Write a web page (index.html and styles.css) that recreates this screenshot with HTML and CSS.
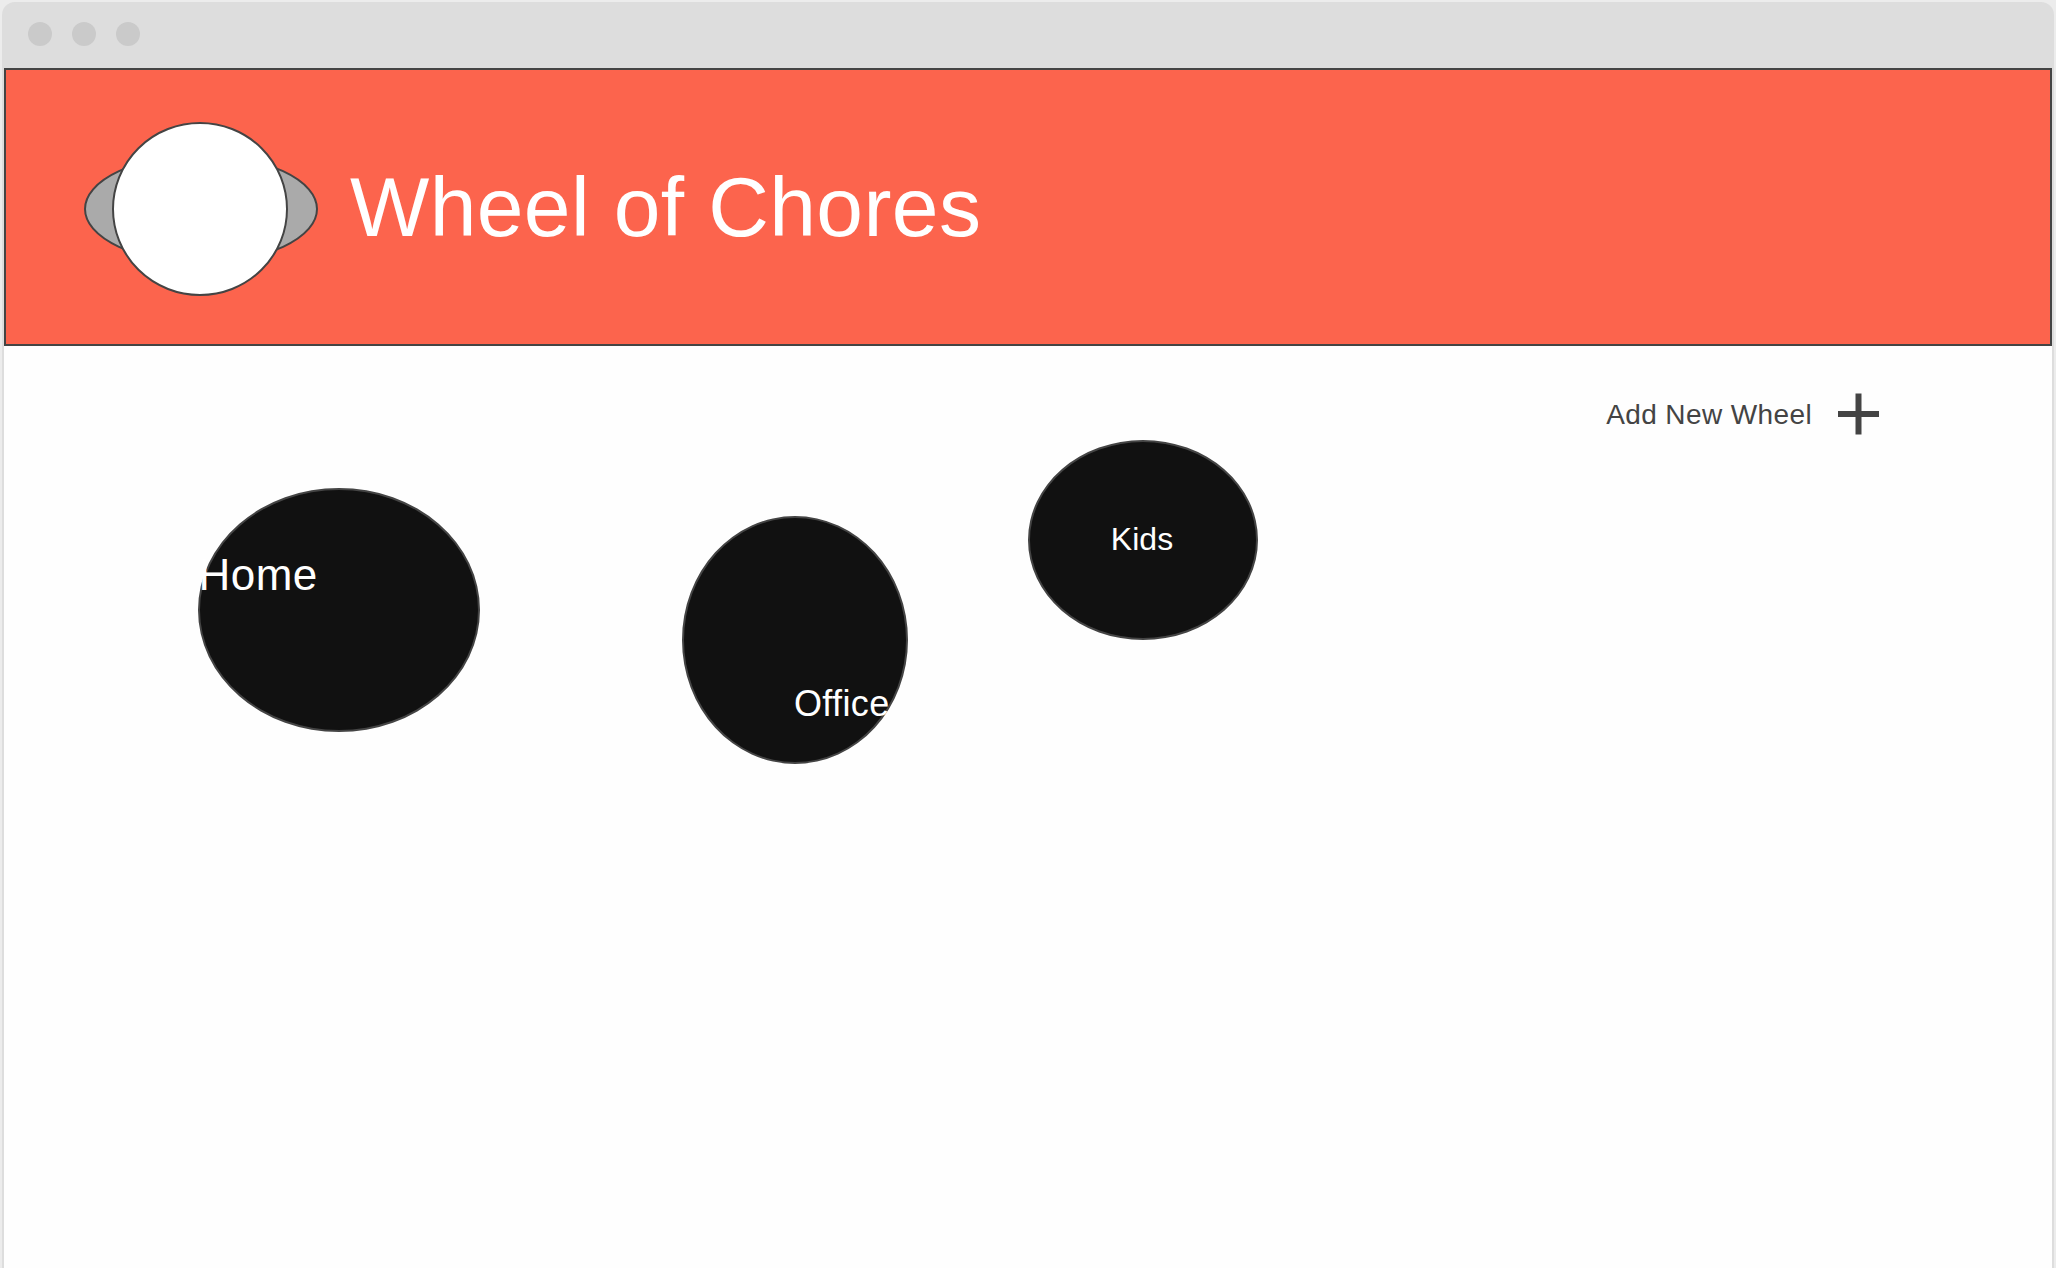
FILE: index.html
```html
<!DOCTYPE html>
<html lang="en">
<head>
<meta charset="utf-8">
<title>Wheel of Chores</title>
<link rel="stylesheet" href="styles.css">
</head>
<body>
<div class="window">
  <div class="titlebar">
    <span class="dot"></span>
    <span class="dot"></span>
    <span class="dot"></span>
  </div>
  <header class="banner">
    <svg class="logo" width="234" height="174" viewBox="0 0 234 174" aria-hidden="true">
      <ellipse class="logo-back" cx="117" cy="87" rx="116" ry="53.5"/>
      <ellipse class="logo-front" cx="116" cy="87" rx="87" ry="86"/>
    </svg>
    <h1 class="title">Wheel of Chores</h1>
  </header>
  <main class="content">
    <button class="add" type="button">
      <span class="add-label">Add New Wheel</span>
      <svg class="plus" width="41" height="42" viewBox="0 0 41 42" aria-hidden="true">
        <path d="M20.5 0.5V41.5M0 21H41"/>
      </svg>
    </button>
    <div class="wheels">
      <div class="wheel home">Home</div>
      <div class="wheel office">Office</div>
      <div class="wheel kids">Kids</div>
    </div>
  </main>
</div>
</body>
</html>
```
FILE: styles.css
```css
* {
  box-sizing: border-box;
}

body {
  margin: 0;
  padding: 2px 2px 0;
  height: 1268px;
  overflow: hidden;
  background: #ececec;
  color: #444;
  font-family: "Liberation Sans", Arial, sans-serif;
}

.window {
  height: 1280px;
  padding: 0 2px;
  border-radius: 13px 13px 0 0;
  background: #ddd;
  overflow: hidden;
}

.titlebar {
  display: flex;
  align-items: center;
  gap: 20px;
  height: 66px;
  padding: 0 24px 2px;
}

.dot {
  width: 24px;
  height: 24px;
  border-radius: 50%;
  background: #cacaca;
}

.banner {
  display: flex;
  align-items: center;
  gap: 32px;
  height: 278px;
  padding: 4px 78px 0;
  border: 2px solid #444;
  background: #fc644d;
}

.logo {
  flex: none;
  stroke: #444;
  stroke-width: 2;
}

.logo-back {
  fill: #aaa;
}

.logo-front {
  fill: #fff;
}

.title {
  margin: 0 0 4px;
  color: #fff;
  font-size: 84px;
  font-weight: 400;
  line-height: 96px;
  letter-spacing: 0.0045em;
}

.content {
  display: flex;
  flex-direction: column;
  height: 932px;
  padding-top: 47px;
  background: #fefefe;
}

.add {
  display: flex;
  align-items: flex-start;
  align-self: flex-end;
  gap: 26px;
  height: 42px;
  margin-right: 173px;
  padding: 0;
  border: 0;
  background: none;
  color: inherit;
  font: 28px/32px "Liberation Sans", Arial, sans-serif;
  letter-spacing: 0.014em;
}

.add-label {
  margin-top: 6px;
}

.plus {
  stroke: #444;
  stroke-width: 6;
}

.wheels {
  display: flex;
  align-items: flex-start;
  padding: 5px 0 0 194px;
}

.wheel {
  flex: none;
  border: 2px solid #444;
  border-radius: 50%;
  background: #111;
  color: #fff;
  white-space: nowrap;
  letter-spacing: 0.01em;
}

.home {
  width: 282px;
  height: 244px;
  margin-top: 48px;
  padding-top: 60px;
  font-size: 44px;
  line-height: 50px;
  text-indent: -1.5px;
}

.office {
  width: 226px;
  height: 248px;
  margin: 76px 0 0 202px;
  padding: 165px 0 0 110px;
  font-size: 36px;
  line-height: 42px;
}

.kids {
  width: 230px;
  height: 200px;
  margin-left: 120px;
  padding: 79px 2px 0 0;
  font-size: 32px;
  line-height: 36px;
  letter-spacing: 0.002em;
  text-align: center;
}
```
